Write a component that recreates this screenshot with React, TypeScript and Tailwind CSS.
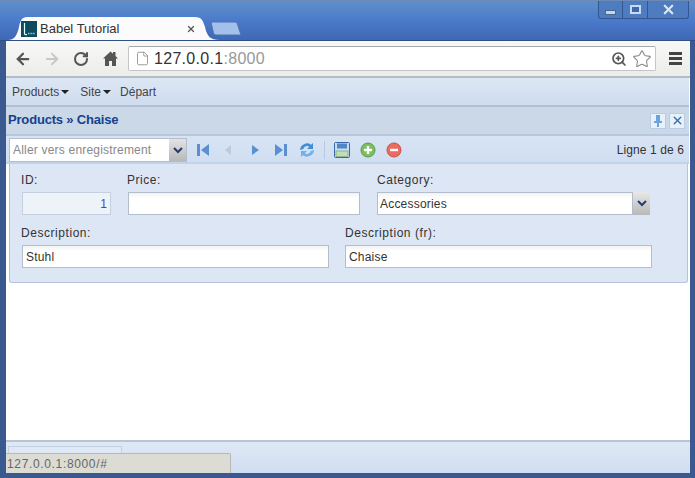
import React from "react";
import { ArrowLeft, ArrowRight, RotateCw, File, ZoomIn, Star, X } from "lucide-react";

const sans = "[font-family:'Liberation_Sans',Arial,sans-serif]";

function Favicon() {
  return (
    <svg width="16" height="16" viewBox="0 0 16 16" className="shrink-0">
      <rect width="16" height="16" fill="#0e4a5e" />
      <path d="M3.500 2v10.500c0 1 1 1.500 2.500 1" fill="none" stroke="#dff" strokeWidth="1.200" />
      <path d="M7 12.500h7" stroke="#9cc" strokeWidth="1.600" strokeDasharray="1 .6" />
    </svg>
  );
}

function WindowControls() {
  return (
    <div className="flex h-[18px] mr-[1px] border border-t-0 border-[#32578f] rounded-b-[3px] bg-[#4f7bc0] w-[91px]">
      <div className="w-[24px] flex items-center justify-center border-r border-[#32578f] pt-[6px]">
        <div className="w-[11px] h-[5px] bg-[#c5d7ee] border border-[#48678f]" />
      </div>
      <div className="w-[25px] flex items-center justify-center border-r border-[#32578f]">
        <div className="w-[11px] h-[9px] border-2 border-[#c9dbf2] bg-[#3f68a8]" />
      </div>
      <div className="flex-1 flex items-center justify-center">
        <X size={15} strokeWidth={3.500} color="#d8e6f6" />
      </div>
    </div>
  );
}

function ChromeTab() {
  return (
    <div className="relative w-[204px] h-[24px] ml-[2px] flex items-center pl-[13px] pr-[16px] pt-[2px]">
      <svg width="212" height="24" viewBox="0 0 212 24" className="absolute left-0 top-0">
        <path d="M0 24C6 24 9 20 11 11 12 5 14 1 19 1H187C194 1 195 5 197 11 199 20 202 24 212 24Z" fill="#fbfbfb" />
      </svg>
      <div className="relative flex items-center flex-1 gap-[3px]">
        <Favicon />
        <span className={`text-[13px] text-[#333] flex-1 ${sans}`}>Babel Tutorial</span>
        <X size={10} strokeWidth={3} color="#555" />
      </div>
    </div>
  );
}

function NewTabButton() {
  return (
    <svg width="32" height="15" viewBox="0 0 32 15" className="ml-[-2px] mb-[4px]">
      <path d="M1 1H25C27 1 27.500 3 28 5L31 14H6C4 14 3.500 12 3 10Z" fill="#a2c0ea" stroke="#4b74ae" />
    </svg>
  );
}

function HomeIcon() {
  return (
    <svg width="15" height="15" viewBox="0 0 15 15">
      <path d="M7.500 0.500 0 7.500h2V15h4v-5h3v5h4V7.500h2L12.500 5V1h-2.500v1.800Z" fill="#555" />
    </svg>
  );
}

function MenuItem({ label, caret }: { label: string; caret?: boolean }) {
  return (
    <div className={`flex items-center text-[12px] text-[#444] ${sans}`}>
      <span>{label}</span>
      {caret && <span className="ml-[2px] mt-[1px] w-0 h-0 border-x-[4px] border-x-transparent border-t-[4px] border-t-[#222]" />}
    </div>
  );
}

function NavIcon({ d, color = "#5b8fd0" }: { d: string; color?: string }) {
  return (
    <svg width="16" height="16" viewBox="0 0 16 16" className="shrink-0">
      <path d={d} fill={color} />
    </svg>
  );
}

function RefreshIcon() {
  return (
    <svg width="16" height="16" viewBox="0 0 16 16" className="shrink-0">
      <path d="M1 8a7 7 0 0 1 11-5.300L14 1v6H8l2.300-2.300a4 4 0 0 0-6 2.300Z" fill="#3f8ed6" />
      <path d="M15 8a7 7 0 0 1-11 5.300L2 15V9h6l-2.300 2.300a4 4 0 0 0 6-2.300Z" fill="#6db2e8" />
    </svg>
  );
}

function SaveIcon() {
  return (
    <svg width="16" height="16" viewBox="0 0 16 16" className="shrink-0">
      <rect x="0.500" y="0.500" width="15" height="15" rx="1" fill="#c9dcf2" stroke="#3a68a8" />
      <rect x="3" y="1.500" width="10" height="5" fill="#4f86c6" />
      <rect x="2" y="9" width="12" height="5.500" fill="#bfe0b0" stroke="#6a9a70" strokeWidth="0.600" />
    </svg>
  );
}

function RoundIcon({ bg, border, plus }: { bg: string; border: string; plus?: boolean }) {
  return (
    <svg width="16" height="16" viewBox="0 0 16 16" className="shrink-0">
      <circle cx="8" cy="8" r="7" fill={bg} stroke={border} />
      <rect x="4" y="6.800" width="8" height="2.400" fill="#fff" />
      {plus && <rect x="6.800" y="4" width="2.400" height="8" fill="#fff" />}
    </svg>
  );
}

function Label({ children }: { children: React.ReactNode }) {
  return <div className={`text-[12px] leading-[14px] tracking-[0.55px] text-[#333] ${sans}`}>{children}</div>;
}

function Input({ value, className = "" }: { value?: string; className?: string }) {
  return (
    <div className={`h-[23px] border border-[#b4bdcc] bg-linear-to-b from-[#f2f2f2] to-white to-[25%] flex items-center px-[3px] text-[12px] tracking-[0.2px] text-[#333] ${sans} ${className}`}>
      {value}
    </div>
  );
}

export default function App() {
  return (
    <div className={`w-[695px] h-[478px] overflow-hidden relative flex flex-col bg-[#39598f] ${sans}`}>
      {/* tab strip */}
      <div className="h-[41px] shrink-0 border-t border-[#6b8bb5] bg-linear-to-b from-[#5f8fc8] via-[#4b7acb] to-[#3f68b4] flex items-start justify-between pl-[6px] pr-[5px] border-b-[1px] border-b-[#2f4f87]">
        <div className="flex items-end h-[39px]">
          <ChromeTab />
          <NewTabButton />
        </div>
        <WindowControls />
      </div>

      <div className="flex-1 flex flex-col mx-[6px] mr-[5px] mb-[5px] min-h-0 bg-white">
        {/* browser toolbar */}
        <div className="h-[37px] shrink-0 bg-linear-to-b from-[#f8f8f8] to-[#ececea] border-b-2 border-[#b4bcc6] flex items-center pl-[8px] pr-[9px]">
          <ArrowLeft size={18} strokeWidth={3} color="#555" className="shrink-0" />
          <ArrowRight size={18} strokeWidth={2.500} color="#c6c8c8" className="shrink-0 ml-[11px]" />
          <RotateCw size={16} strokeWidth={3} color="#555" className="shrink-0 ml-[12px]" />
          <div className="ml-[14px] shrink-0"><HomeIcon /></div>
          <div className="ml-[10px] w-[528px] h-[25px] bg-white border border-[#c3c6c8] border-t-[#a6a9ab] rounded-[2px] flex items-center pl-[6px] pr-[3px] shrink-0">
            <File size={15} strokeWidth={1.300} color="#888" />
            <span className={`ml-[4px] text-[16px] tracking-[0.3px] text-[#333] flex-1 ${sans}`}>
              127.0.0.1<span className="text-[#999]">:8000</span>
            </span>
            <ZoomIn size={16} strokeWidth={2.500} color="#555" />
            <Star size={20} strokeWidth={1.300} color="#8a8a8a" className="ml-[5px]" />
          </div>
          <div className="ml-[13px] flex flex-col gap-[2px] shrink-0">
            <div className="w-[13px] h-[3px] bg-[#444]" />
            <div className="w-[13px] h-[3px] bg-[#444]" />
            <div className="w-[13px] h-[3px] bg-[#444]" />
          </div>
        </div>

        {/* app menu */}
        <div className="h-[29px] shrink-0 bg-linear-to-b from-[#dde7f5] to-[#cfdcef] border-b-2 border-[#b4c0d2] flex items-center pl-[6px] pr-[2px] mr-[1px]">
          <MenuItem label="Products" caret />
          <div className="ml-[11px]"><MenuItem label="Site" caret /></div>
          <div className="ml-[9px]"><MenuItem label="Départ" /></div>
        </div>

        {/* panel title */}
        <div className="h-[29px] shrink-0 bg-[#cbd8e8] border-b-2 border-[#b7c8de] flex items-center justify-between pl-[2px] pr-[4px] mr-[1px]">
          <span className={`text-[13px] tracking-[-0.18px] font-bold text-[#15428b] mb-[2px] ${sans}`}>Products » Chaise</span>
          <div className="flex gap-[3px]">
            <div className="w-[16px] h-[16px] border border-[#b9cce4] bg-[#e8f0fa] flex items-center justify-center">
              <svg width="10" height="12" viewBox="0 0 10 12"><path d="M3 0h4v6h2v2H6v4H4V8H1V6h2Z" fill="#6aa4e0" /></svg>
            </div>
            <div className="w-[16px] h-[16px] border border-[#b9cce4] bg-[#e8f0fa] flex items-center justify-center">
              <X size={13} strokeWidth={2.500} color="#3a6fb0" />
            </div>
          </div>
        </div>

        {/* record toolbar */}
        <div className="h-[28px] shrink-0 bg-linear-to-b from-[#d8e4f4] to-[#d0def2] border-b-[2px] border-[#c2d2e8] flex items-center pl-[3px] pr-[5px] mr-[1px] pt-[2px]">
          <div className="w-[178px] h-[24px] flex border border-[#b4bdcc] bg-white shrink-0">
            <div className={`flex-1 flex items-center pl-[3px] text-[12px] tracking-[0.2px] text-[#888] ${sans}`}>Aller vers enregistrement</div>
            <div className="w-[17px] bg-linear-to-b from-[#e4e4e4] to-[#b8b8b8] flex items-center justify-center">
              <svg width="10" height="7" viewBox="0 0 10 7"><path d="M1 1l4 4 4-4" fill="none" stroke="#1f3f6f" strokeWidth="2" /></svg>
            </div>
          </div>
          <div className="flex items-center ml-[8px] shrink-0">
            <NavIcon d="M2 2h3v12H2Zm12 0v12L6 8Z" />
            <div className="ml-[9px]"><NavIcon d="M11 3v10L5 8Z" color="#bccadb" /></div>
            <div className="ml-[11px]"><NavIcon d="M5 3v10l7-5Z" /></div>
            <div className="ml-[10px]"><NavIcon d="M2 2v12l8-6Zm9 0h3v12h-3Z" /></div>
            <div className="ml-[10px]"><RefreshIcon /></div>
          </div>
          <div className="w-px h-[18px] bg-[#b8c8de] ml-[9px] shrink-0" />
          <div className="flex items-center gap-[10px] ml-[9px] shrink-0">
            <SaveIcon />
            <RoundIcon bg="#7cc060" border="#5a9a48" plus />
            <RoundIcon bg="#ec6a60" border="#c8504a" />
          </div>
          <div className={`ml-auto text-[12px] tracking-[0.1px] text-[#333] ${sans}`}>Ligne 1 de 6</div>
        </div>

        {/* form */}
        <div className="h-[119px] shrink-0 ml-[3px] mr-[2px] bg-[#dde6f4] border border-t-0 border-[#b5c4da] rounded-b-[3px] pl-[12px] pt-[9px] flex flex-col">
          <div className="flex">
            <div className="w-[89px] flex flex-col gap-[5px]">
              <Label><span className="ml-[-1px]">ID:</span></Label>
              <Input className="!bg-none !bg-[#eef3fa] justify-end !text-[#4a4aa8] !border-[#c4d0e0]" value="1" />
            </div>
            <div className="w-[232px] ml-[17px] flex flex-col gap-[5px]">
              <Label><span className="ml-[-1px]">Price:</span></Label>
              <Input />
            </div>
            <div className="w-[273px] ml-[17px] flex flex-col gap-[5px]">
              <Label>Category:</Label>
              <div className="h-[23px] flex">
                <Input value="Accessories" className="flex-1 !pl-[2px]" />
                <div className="w-[17px] bg-linear-to-b from-[#e8e8e8] to-[#b8b8b8] flex items-center justify-center">
                  <svg width="10" height="7" viewBox="0 0 10 7"><path d="M1 1l4 4 4-4" fill="none" stroke="#1f3f6f" strokeWidth="2" /></svg>
                </div>
              </div>
            </div>
          </div>
          <div className="flex mt-[11px]">
            <div className="w-[307px] flex flex-col gap-[5px]">
              <Label><span className="ml-[-1px]">Description:</span></Label>
              <Input value="Stuhl" />
            </div>
            <div className="w-[307px] ml-[16px] flex flex-col gap-[5px]">
              <Label>Description (fr):</Label>
              <Input value="Chaise" />
            </div>
          </div>
        </div>

        <div className="flex-1 bg-white" />

        {/* footer */}
        <div className="h-[33px] shrink-0 border-t-[2px] border-[#b8c4d4] bg-linear-to-b from-[#dfe8f5] to-[#d0def2] pl-[2px] pt-[4px]">
          <div className="w-[114px] h-[8px] border-x border-t border-[#c4d0e0] bg-[#dfe8f5]" />
        </div>
      </div>

      {/* status bubble */}
      <div className={`absolute left-[6px] bottom-[5px] w-[225px] h-[20px] bg-[#dcdcd4] border-r border-t border-[#b8b8b8] rounded-tr-[2px] flex items-center pl-[1px] text-[12px] tracking-[0.65px] text-[#666] ${sans}`}>
        127.0.0.1:8000/#
      </div>
    </div>
  );
}
